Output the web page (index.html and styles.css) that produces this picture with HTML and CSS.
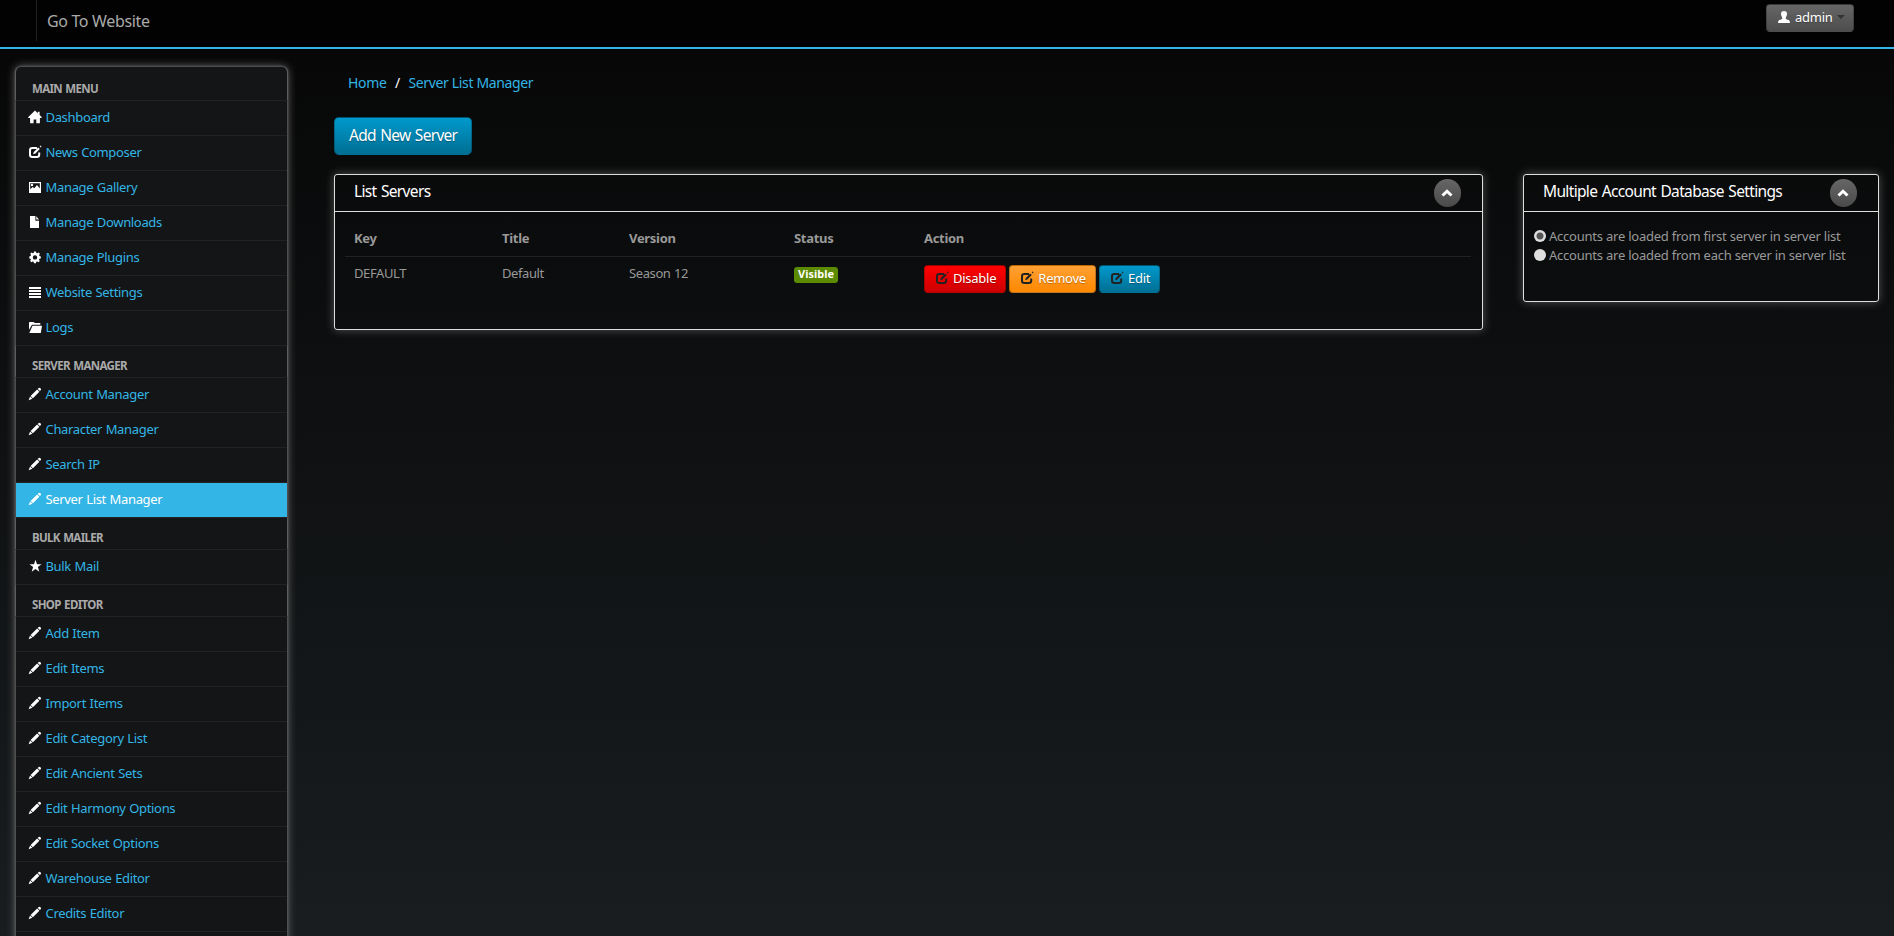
FILE: index.html
```html
<!DOCTYPE html>
<html lang="en">
<head>
    <meta charset="utf-8">
    <title>Server List Manager</title>
    <link rel="stylesheet" href="styles.css">
</head>
<body>
    <svg class="sprite" width="0" height="0">
        <symbol id="i-home" viewBox="0 0 14 14"><path d="M7 .6.3 7v.9h1.8v5.400h3.500V9.400h2.700v3.900h3.600V7.900h1.700V7l-2-1.900V1.800H9.800v1.400z"/></symbol>
        <symbol id="i-edit" viewBox="0 0 14 14"><path d="M9 3H4.400Q2 3 2 5.300v4.400Q2 12 4.400 12h4.400q2.400 0 2.400-2.300V7.600" fill="none" stroke="currentColor" stroke-width="2"/><path d="M10.200 2.400l1.600 1.600-4.400 4.600-2.300.7.7-2.400zM11.600 1l.8-.5 1.200 1.200-.8.8z"/></symbol>
        <symbol id="i-picture" viewBox="0 0 14 14"><path fill-rule="evenodd" d="M1 2h12v11H1zM2.200 3.200v6L4.700 7l1.600 1.300L9 5l2.800 3.400V3.200zM4 3.800a1.200 1.200 0 1 1 0 2.400 1.200 1.200 0 0 1 0-2.400z"/></symbol>
        <symbol id="i-file" viewBox="0 0 14 14"><path d="M2 1h5.400v4.700H11V13H2zM8.300 1.300 11 4.600H8.300z"/></symbol>
        <symbol id="i-cog" viewBox="0 0 14 14"><path fill-rule="evenodd" d="M6 1.400h2l.3 1.500 1 .4 1.300-.8 1.300 1.300-.8 1.300.4 1 1.300.3v2l-1.400.3-.4 1 .8 1.200-1.300 1.300-1.200-.8-1 .4-.4 1.400H6l-.4-1.400-1-.4-1.200.8-1.300-1.300.8-1.200-.4-1L1.300 8.400v-2l1.300-.3.4-1-.8-1.300 1.300-1.300 1.200.8 1-.4zM7 5.200a2.200 2.200 0 1 0 0 4.400 2.200 2.200 0 0 0 0-4.400z"/></symbol>
        <symbol id="i-list" viewBox="0 0 14 14"><path d="M1 2h12v2H1zM1 5h12v2H1zM1 8h12v2H1zM1 11h12v2H1z"/></symbol>
        <symbol id="i-folder" viewBox="0 0 14 14"><path d="M1 2.600Q1 2 1.600 2h4.200l.8 1h5.700v1.800H4L1 9.800zM4.500 5.700H14l-1.200 7.300H1.300z"/></symbol>
        <symbol id="i-pencil" viewBox="0 0 14 14"><path d="M10.700.9q.9-.5 1.800.4t.4 1.800l-1 1-2.200-2.200zM9.100 2.500l2.300 2.300-6.500 6.500L2.600 9zM2.100 9.500l2.300 2.300L.6 13.200z"/></symbol>
        <symbol id="i-star" viewBox="0 0 14 14"><path d="M7.500.8 9 5.300h4.500L9.900 8.100l1.400 4.700-3.800-2.800-3.800 2.800 1.400-4.700L1.500 5.300H6z"/></symbol>
        <symbol id="i-user" viewBox="0 0 14 14"><path d="M7 1q3 0 3 3.100 0 2-1.200 3.300v1.400q.6.7 2.800 1.300 1.400.5 1.400 2.900H1q0-2.400 1.400-2.900 2.200-.6 2.800-1.300V7.400Q4 6.100 4 4.100 4 1 7 1z"/></symbol>
        <symbol id="i-up" viewBox="0 0 14 14"><path d="M2.500 9.500 7 5.200l4.500 4.300" fill="none" stroke="currentColor" stroke-width="3"/></symbol>
    </svg>

    <div class="navbar">
        <a class="brand" href="#">Go To Website</a>
        <button class="btn btn-user"><svg class="icon"><use href="#i-user"/></svg><span>admin</span><i class="caret"></i></button>
    </div>

    <div class="container">
        <ul class="sidebar">
            <li class="nav-header">Main Menu</li>
            <li><a href="#"><svg class="icon"><use href="#i-home"/></svg>Dashboard</a></li>
            <li><a href="#"><svg class="icon"><use href="#i-edit"/></svg>News Composer</a></li>
            <li><a href="#"><svg class="icon"><use href="#i-picture"/></svg>Manage Gallery</a></li>
            <li><a href="#"><svg class="icon"><use href="#i-file"/></svg>Manage Downloads</a></li>
            <li><a href="#"><svg class="icon"><use href="#i-cog"/></svg>Manage Plugins</a></li>
            <li><a href="#"><svg class="icon"><use href="#i-list"/></svg>Website Settings</a></li>
            <li><a href="#"><svg class="icon"><use href="#i-folder"/></svg>Logs</a></li>
            <li class="nav-header">Server Manager</li>
            <li><a href="#"><svg class="icon"><use href="#i-pencil"/></svg>Account Manager</a></li>
            <li><a href="#"><svg class="icon"><use href="#i-pencil"/></svg>Character Manager</a></li>
            <li><a href="#"><svg class="icon"><use href="#i-pencil"/></svg>Search IP</a></li>
            <li class="active"><a href="#"><svg class="icon"><use href="#i-pencil"/></svg>Server List Manager</a></li>
            <li class="nav-header">Bulk Mailer</li>
            <li><a href="#"><svg class="icon"><use href="#i-star"/></svg>Bulk Mail</a></li>
            <li class="nav-header">Shop Editor</li>
            <li><a href="#"><svg class="icon"><use href="#i-pencil"/></svg>Add Item</a></li>
            <li><a href="#"><svg class="icon"><use href="#i-pencil"/></svg>Edit Items</a></li>
            <li><a href="#"><svg class="icon"><use href="#i-pencil"/></svg>Import Items</a></li>
            <li><a href="#"><svg class="icon"><use href="#i-pencil"/></svg>Edit Category List</a></li>
            <li><a href="#"><svg class="icon"><use href="#i-pencil"/></svg>Edit Ancient Sets</a></li>
            <li><a href="#"><svg class="icon"><use href="#i-pencil"/></svg>Edit Harmony Options</a></li>
            <li><a href="#"><svg class="icon"><use href="#i-pencil"/></svg>Edit Socket Options</a></li>
            <li><a href="#"><svg class="icon"><use href="#i-pencil"/></svg>Warehouse Editor</a></li>
            <li><a href="#"><svg class="icon"><use href="#i-pencil"/></svg>Credits Editor</a></li>
            <li></li>
        </ul>

        <div class="content">
            <div class="breadcrumb"><a href="#">Home</a><span class="divider">/</span><a href="#">Server List Manager</a></div>
            <a class="btn btn-primary btn-large" href="#">Add New Server</a>

            <div class="row">
                <div class="box box-servers">
                    <div class="box-header">
                        <h2>List Servers</h2>
                        <a class="btn-round" href="#"><svg class="icon"><use href="#i-up"/></svg></a>
                    </div>
                    <div class="box-content">
                        <table class="table">
                            <thead>
                                <tr><th class="c-key">Key</th><th class="c-title">Title</th><th class="c-version">Version</th><th class="c-status">Status</th><th>Action</th></tr>
                            </thead>
                            <tbody>
                                <tr>
                                    <td>DEFAULT</td>
                                    <td>Default</td>
                                    <td>Season 12</td>
                                    <td><span class="label">Visible</span></td>
                                    <td>
                                        <div class="actions">
                                            <a class="btn btn-danger" href="#"><svg class="icon"><use href="#i-edit"/></svg><span>Disable</span></a>
                                            <a class="btn btn-warning" href="#"><svg class="icon"><use href="#i-edit"/></svg><span>Remove</span></a>
                                            <a class="btn btn-primary" href="#"><svg class="icon"><use href="#i-edit"/></svg><span>Edit</span></a>
                                        </div>
                                    </td>
                                </tr>
                            </tbody>
                        </table>
                    </div>
                </div>

                <div class="box box-settings">
                    <div class="box-header">
                        <h2>Multiple Account Database Settings</h2>
                        <a class="btn-round" href="#"><svg class="icon"><use href="#i-up"/></svg></a>
                    </div>
                    <div class="box-content">
                        <label class="radio"><input type="radio" name="accounts" checked>Accounts are loaded from first server in server list</label>
                        <label class="radio"><input type="radio" name="accounts">Accounts are loaded from each server in server list</label>
                    </div>
                </div>
            </div>
        </div>
    </div>
</body>
</html>
```

FILE: styles.css
```css
* {
    box-sizing: border-box;
}
body {
    margin: 0;
    height: 936px;
    overflow: hidden;
    font-family: "Noto Sans", "Open Sans", sans-serif;
    font-size: 13px;
    line-height: 18px;
    color: #999;
    background: linear-gradient(#060606, #191d20);
}
a {
    color: #33b5e5;
    text-decoration: none;
}
.sprite {
    display: none;
}
.icon {
    width: 14px;
    height: 14px;
    flex: none;
    fill: currentColor;
}

/* top bar */
.navbar {
    display: flex;
    justify-content: space-between;
    align-items: flex-start;
    height: 49px;
    padding: 0 40px 0 36px;
    background: #020202;
    border-bottom: 2px solid #33b5e5;
}
.brand {
    height: 41px;
    padding-left: 10px;
    border-left: 1px solid #222;
    font-size: 16px;
    line-height: 42px;
    letter-spacing: -0.35px;
    color: #aaa;
}

/* buttons */
.btn {
    display: flex;
    align-items: center;
    height: 28px;
    padding: 0 9px 2px 10px;
    border: 1px solid rgba(0, 0, 0, 0.25);
    border-radius: 4px;
    font: inherit;
    letter-spacing: -0.25px;
    color: #fff;
    text-shadow: 0 1px 1px rgba(0, 0, 0, 0.3);
}
.btn .icon {
    margin-right: 4px;
}
.btn-user {
    width: 88px;
    margin-top: 4px;
    background: linear-gradient(#666, #4d4d4d);
}
.caret {
    margin-left: 4px;
    border: 4px solid transparent;
    border-top-color: #333;
    border-bottom: 0;
}
.btn-primary {
    background: linear-gradient(#0099cc, #006f94);
}
.btn-danger {
    background: linear-gradient(#ff0000, #cc0000);
}
.btn-warning {
    background: linear-gradient(#ffa033, #ff8800);
}
.btn-large {
    width: 138px;
    height: 38px;
    padding: 0 14px 2px;
    border-radius: 5px;
    font-size: 15.5px;
    letter-spacing: -0.7px;
    word-spacing: 1px;
    white-space: nowrap;
}

/* sidebar */
.container {
    display: flex;
    align-items: flex-start;
    padding: 18px 15px 0 16px;
}
.sidebar {
    flex: none;
    width: 271px;
    margin: 0;
    padding: 0;
    list-style: none;
    background: #141517;
    border-radius: 5px 5px 0 0;
    box-shadow: 0 0 2px 1px #555, 0 0 10px #777;
}
.sidebar li {
    height: 35px;
    border-bottom: 1px solid #222;
}
.sidebar a {
    display: flex;
    align-items: center;
    height: 34px;
    padding: 0 0 2px 12px;
    letter-spacing: -0.33px;
    word-spacing: 0.5px;
}
.sidebar .icon {
    margin-right: 3.5px;
    color: #fff;
}
.sidebar .nav-header {
    height: 32px;
    margin: 0 -1px;
    padding: 11px 0 0 16px;
    border-left: 1px solid #5e5e5e;
    border-right: 1px solid #5e5e5e;
    font-size: 11.5px;
    font-weight: bold;
    letter-spacing: -0.65px;
    word-spacing: 1px;
    text-transform: uppercase;
    color: #aaa;
}
.sidebar .nav-header:first-child {
    height: 34px;
    padding-top: 13px;
    border-radius: 5px 5px 0 0;
}
.sidebar .active a {
    background: #33b5e5;
    color: #fff;
}

/* page */
.content {
    flex: 1;
    padding: 6px 0 0 47px;
}
.breadcrumb {
    display: flex;
    height: 44px;
    padding-left: 14px;
    font-size: 14px;
    line-height: 20px;
    letter-spacing: -0.35px;
}
.divider {
    width: 22px;
    text-align: center;
    color: #fff;
}
.row {
    display: flex;
    align-items: flex-start;
    gap: 40px;
    margin-top: 19px;
}
.box {
    border: 1px solid #dedede;
    border-radius: 3px;
    box-shadow: 0 0 10px rgba(189, 189, 189, 0.4);
}
.box-servers {
    width: 1149px;
    height: 156px;
}
.box-settings {
    width: 356px;
    height: 128px;
}
.box-header {
    display: flex;
    justify-content: space-between;
    height: 37px;
    padding: 4px 21px 0 19px;
    border-bottom: 1px solid #dedede;
}
.box-header h2 {
    margin: 0;
    font-size: 15.5px;
    font-weight: normal;
    line-height: 25px;
    letter-spacing: -0.65px;
    word-spacing: 1px;
    color: #fff;
}
.btn-round {
    display: flex;
    align-items: center;
    justify-content: center;
    width: 27px;
    height: 28px;
    padding-right: 1px;
    border-radius: 14px;
    background: linear-gradient(#666, #4a4a4a);
    color: #fff;
}
.box-content {
    padding: 10px;
}
.box-settings .box-content {
    padding-top: 14px;
}
.table {
    width: 1126px;
    table-layout: fixed;
    border-collapse: collapse;
}
.table th,
.table td {
    padding: 7px 0 7px 9px;
    text-align: left;
    vertical-align: top;
}
.table th {
    height: 34px;
    letter-spacing: -0.3px;
}
.table td {
    border-top: 1px solid #222;
    letter-spacing: -0.4px;
    word-spacing: 0.5px;
}
.c-key {
    width: 148px;
}
.c-title {
    width: 127px;
}
.c-version {
    width: 165px;
}
.c-status {
    width: 130px;
}
.label {
    display: inline-block;
    height: 16px;
    margin-top: 1px;
    padding: 0 4px;
    border-radius: 3px;
    background: #5c8a00;
    font-size: 11px;
    font-weight: bold;
    line-height: 14px;
    letter-spacing: 0;
    color: #fff;
}
.actions {
    display: flex;
    gap: 3px;
    padding-top: 1px;
}
.actions .icon {
    color: #222;
}
.radio {
    display: flex;
    align-items: center;
    height: 19px;
    letter-spacing: -0.23px;
}
.radio input {
    appearance: none;
    width: 12px;
    height: 12px;
    margin: 0 3px 0 0;
    border-radius: 50%;
    background: #dedede;
}
.radio input:checked {
    background: radial-gradient(circle, #555 3px, #dedede 4px);
}
```
